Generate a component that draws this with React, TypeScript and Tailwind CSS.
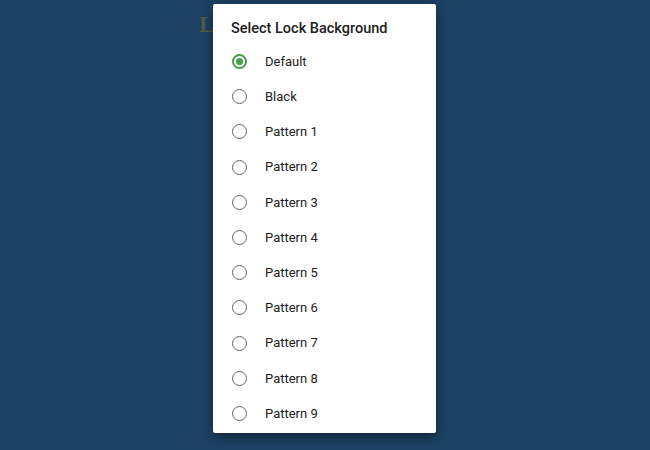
import React from "react";

const items = ["Default", "Black", "Pattern 1", "Pattern 2", "Pattern 3", "Pattern 4", "Pattern 5", "Pattern 6", "Pattern 7", "Pattern 8", "Pattern 9"];

export default function App() {
  return (
    <div className="relative w-[650px] h-[450px] overflow-hidden bg-[#1d4163]" style={{ fontFamily: "Roboto, 'Noto Sans', sans-serif" }}>
      <div className="absolute left-[199px] top-[6px] w-[14px] overflow-hidden whitespace-nowrap text-[24px] font-bold text-[#4e5a46]" style={{ fontFamily: "'Liberation Serif', serif" }}>
        Lo
      </div>
      <div className="relative flex justify-center pt-[4px] pr-[1px]">
        <div className="w-[223px] h-[429px] bg-white rounded-[2px] shadow-[0_4px_12px_rgba(0,0,0,0.45)] flex flex-col pt-[15px] pl-[18px]">
          <div className="text-[14.5px] font-medium text-[#212121] leading-[20px] h-[20px]">Select Lock Background</div>
          <div className="flex flex-col mt-[5px]">
            {items.map((t, i) => (
              <div key={t} className="h-[35.2px] flex items-center">
                {i === 0 ? (
                  <div className="w-[15px] h-[15px] rounded-full border-2 border-[#43a047] flex items-center justify-center ml-[1px]">
                    <div className="w-[7px] h-[7px] rounded-full bg-[#43a047]" />
                  </div>
                ) : (
                  <div className="w-[15px] h-[15px] rounded-full border-[1.5px] border-[#666666] ml-[1px]" />
                )}
                <span className="ml-[18px] text-[13px] text-[#212121]">{t}</span>
              </div>
            ))}
          </div>
        </div>
      </div>
    </div>
  );
}
